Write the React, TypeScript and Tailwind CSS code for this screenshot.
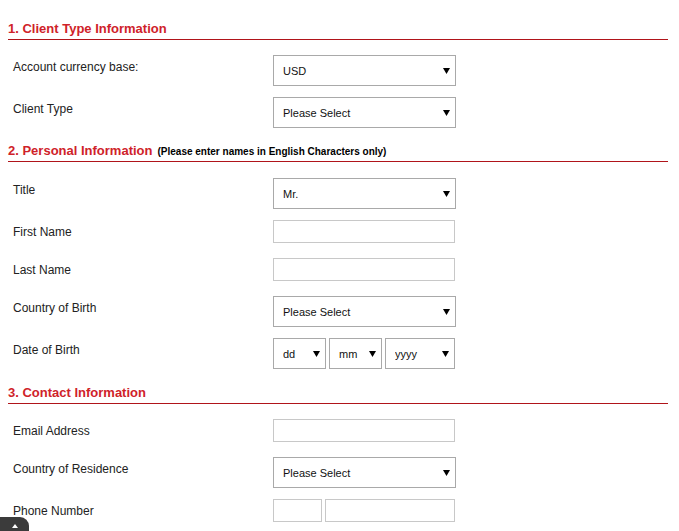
import React from "react"

const font = "font-['Liberation_Sans',Arial,sans-serif]"

function SectionHeader({
  title,
  note,
  gap = "mb-[15px]",
}: {
  title: string
  note?: string
  gap?: string
}) {
  return (
    <div className={`h-[23px] pt-[4px] border-b border-[#b0141a] flex items-baseline ${gap}`}>
      <span className="text-[13px] leading-[16px] font-bold text-[#cf2229]">{title}</span>
      {note && (
        <span className="ml-[5px] text-[10px] leading-[16px] font-bold text-black">{note}</span>
      )}
    </div>
  )
}

function Arrow() {
  return (
    <svg
      className="absolute right-[6px] top-1/2 -translate-y-1/2 pointer-events-none"
      width="7"
      height="6"
      viewBox="0 0 7 6"
    >
      <path d="M0 0h7L3.5 6z" fill="#000" />
    </svg>
  )
}

function Select({ value, className = "w-[183px]" }: { value: string; className?: string }) {
  return (
    <div className={`relative h-[31px] ${className}`}>
      <select
        defaultValue={value}
        className={`appearance-none w-full h-full bg-white border border-[#a9a9a9] pl-[9px] pr-[16px] pt-[1px] text-[11px] text-[#111] outline-none ${font}`}
      >
        <option>{value}</option>
      </select>
      <Arrow />
    </div>
  )
}

function Input({ className = "w-[182px]" }: { className?: string }) {
  return <input className={`h-[23px] bg-white border border-[#c8c8c8] outline-none ${className}`} />
}

function Row({
  label,
  gap = "mb-[11px]",
  children,
}: {
  label: string
  gap?: string
  children: React.ReactNode
}) {
  return (
    <div className={`flex items-start ${gap}`}>
      <div className="w-[265px] pl-[5px] pt-[5px] text-[12px] leading-[14px] text-[#222]">{label}</div>
      <div className="flex gap-[3px]">{children}</div>
    </div>
  )
}

export default function App() {
  return (
    <div className={`min-h-[531px] bg-white pt-[17px] pl-[8px] pr-[11px] ${font}`}>
      <SectionHeader title="1. Client Type Information" />
      <Row label="Account currency base:">
        <Select value="USD" />
      </Row>
      <Row label="Client Type">
        <Select value="Please Select" />
      </Row>

      <SectionHeader
        title="2. Personal Information"
        note="(Please enter names in English Characters only)"
        gap="mb-[16px]"
      />
      <Row label="Title">
        <Select value="Mr." />
      </Row>
      <Row label="First Name" gap="mb-[15px]">
        <Input />
      </Row>
      <Row label="Last Name" gap="mb-[15px]">
        <Input />
      </Row>
      <Row label="Country of Birth">
        <Select value="Please Select" />
      </Row>
      <Row label="Date of Birth" gap="mb-[12px]">
        <Select value="dd" className="w-[53px]" />
        <Select value="mm" className="w-[53px]" />
        <Select value="yyyy" className="w-[70px]" />
      </Row>

      <SectionHeader title="3. Contact Information" />
      <Row label="Email Address" gap="mb-[15px]">
        <Input />
      </Row>
      <Row label="Country of Residence">
        <Select value="Please Select" />
      </Row>
      <Row label="Phone Number" gap="mb-[15px]">
        <Input className="w-[49px]" />
        <Input className="w-[130px]" />
      </Row>

      <button className="fixed left-0 bottom-0 w-[29px] h-[14px] bg-[#3b3b3b] rounded-tr-[9px] flex justify-center pt-[7px]">
        <svg width="6" height="4" viewBox="0 0 6 4">
          <path d="M3 0L6 4H0z" fill="#fff" />
        </svg>
      </button>
    </div>
  )
}
